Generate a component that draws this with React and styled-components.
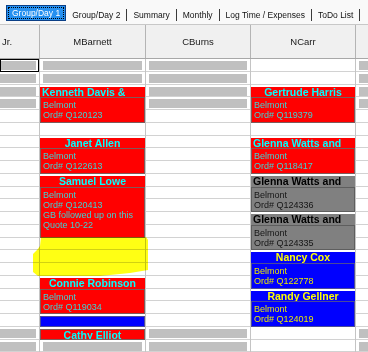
import React from 'react';
import styled, { createGlobalStyle, css } from 'styled-components';

const RH = 12.75;
const COLS = '40px 106px 105px 105px 106px';

const GlobalStyle = createGlobalStyle`
  html, body { margin: 0; padding: 0; background: #fff; }
  body {
    font-family: "Liberation Sans", Arial, sans-serif;
    width: 368px; height: 352px; overflow: hidden;
  }
  * { box-sizing: border-box; }
`;

const Screen = styled.div`
  width: 368px;
  height: 352px;
  overflow: hidden;
  display: flex;
  flex-direction: column;
  background: #fff;
`;

const TabBar = styled.div`
  flex: none;
  height: 25px;
  display: flex;
  align-items: flex-end;
  padding: 0 0 3px 6px;
  background: #f9f9f9;
  border-bottom: 1px solid #c8c8c8;
`;

const Tab = styled.div`
  height: 12px;
  line-height: 12px;
  padding: 0 6px;
  font-size: 8.5px;
  color: #111;
  white-space: nowrap;
  border-right: 1px solid #3a3a3a;
  ${p => p.$active && css`
    height: 16px;
    line-height: 14px;
    padding: 0 5px;
    background: #2590f0;
    color: #fff;
    border: 1px solid #0b3f86;
    outline: 1px dotted #000;
    outline-offset: -3px;
  `}
`;

const HeaderRow = styled.div`
  flex: none;
  height: 34px;
  display: grid;
  grid-template-columns: ${COLS};
  background: #f0f0f0;
  border-bottom: 1px solid #a8a8a8;
  overflow: hidden;
`;

const HeaderCell = styled.div`
  display: flex;
  align-items: center;
  justify-content: ${p => (p.$left ? 'flex-start' : 'center')};
  padding-left: ${p => (p.$left ? '2px' : '0')};
  border-right: 1px solid #b4b4b4;
  font-size: 9.5px;
  color: #1a1a1a;
  white-space: nowrap;
  overflow: hidden;
`;

const Body = styled.div`
  position: relative;
  flex: 1;
  display: grid;
  grid-template-columns: ${COLS};
  overflow: hidden;
`;

const Column = styled.div`
  display: flex;
  flex-direction: column;
  border-right: 1px solid #c4c4c4;
  overflow: hidden;
`;

const Cell = styled.div`
  flex: none;
  height: ${RH}px;
  padding: 2px 3px 0 ${p => (p.$flush ? 0 : 3)}px;
  border-bottom: 1px solid #d2d2d2;
  ${p => p.$focus && css`
    outline: 1px solid #000;
    outline-offset: -1px;
  `}
`;

const Bar = styled.div`
  height: 9px;
  background: #c0c0c0;
`;

const PALETTE = {
  red: { bg: '#ff0000', head: '#00ffff', text: '#3fd2d2', edge: '#7e5a5a' },
  gray: { bg: '#808080', head: '#000000', text: '#151515', edge: '#5e5e5e' },
  blue: { bg: '#0000ff', head: '#ffff00', text: '#e6e600', edge: '#4a4a9a' },
};

const Card = styled.div`
  flex: none;
  height: ${p => p.$span * RH}px;
  padding-top: 2px;
  display: flex;
  flex-direction: column;
  background: #fff;
`;

const CardHeader = styled.div`
  flex: ${p => (p.$alone ? '1 1 auto' : 'none')};
  height: ${p => (p.$alone ? 'auto' : `${RH - 2}px`)};
  display: flex;
  align-items: safe center;
  justify-content: center;
  overflow: hidden;
  padding: 0 2px;
  background: ${p => PALETTE[p.$tone].bg};
  color: ${p => PALETTE[p.$tone].head};
  font-size: 10.5px;
  font-weight: bold;
  line-height: 10.5px;
  ${p => p.$alone && css`border: 1px solid ${PALETTE[p.$tone].edge};`}
`;

const Name = styled.span`
  text-align: left;
`;

const CardBody = styled.div`
  flex: 1;
  padding: 2px 0 0 2px;
  background: ${p => PALETTE[p.$tone].bg};
  border: 1px solid ${p => PALETTE[p.$tone].edge};
  color: ${p => PALETTE[p.$tone].text};
  font-size: 9px;
  line-height: 10px;
  overflow: hidden;
`;

const Line = styled.div`
  white-space: nowrap;
  overflow: hidden;
`;

const Highlight = styled.svg`
  position: absolute;
  left: 0;
  top: 0;
  width: 368px;
  height: 293px;
  pointer-events: none;
  mix-blend-mode: multiply;
`;

const bar = (focus) => ({ type: 'bar', focus });
const empty = () => ({ type: 'empty' });
const rep = (n, f) => Array.from({ length: n }, () => f());
const card = (name, tone, span, lines = []) => ({ type: 'card', name, tone, span, lines });
const ord = (n) => ['Belmont', `Ord# ${n}`];

const columns = [
  {
    header: 'Jr.', left: true, flush: true,
    items: [bar(true), bar(), bar(), bar(), ...rep(17, empty), bar(), bar()],
  },
  {
    header: 'MBarnett',
    items: [
      bar(), bar(),
      card('Kenneth Davis & Associates', 'red', 3, ord('Q120123')),
      empty(),
      card('Janet Allen', 'red', 3, ord('Q122613')),
      card('Samuel Lowe', 'red', 5, [...ord('Q120413'), 'GB followed up on this', 'Quote 10-22']),
      empty(), empty(), empty(),
      card('Connie Robinson', 'red', 3, ord('Q119034')),
      card('', 'blue', 1),
      card('Cathy Elliot', 'red', 1),
      bar(),
    ],
  },
  {
    header: 'CBurns',
    items: [bar(), bar(), bar(), bar(), ...rep(17, empty), bar(), bar()],
  },
  {
    header: 'NCarr',
    items: [
      empty(), empty(),
      card('Gertrude Harris', 'red', 3, ord('Q119379')),
      empty(),
      card('Glenna Watts and Family', 'red', 3, ord('Q118417')),
      card('Glenna Watts and Family', 'gray', 3, ord('Q124336')),
      card('Glenna Watts and Family', 'gray', 3, ord('Q124335')),
      card('Nancy Cox', 'blue', 3, ord('Q122778')),
      card('Randy Gellner', 'blue', 3, ord('Q124019')),
      empty(), empty(),
    ],
  },
  {
    header: '',
    items: [bar(), bar(), bar(), bar(), ...rep(17, empty), bar(), bar()],
  },
];

const tabs = ['Group/Day 1', 'Group/Day 2', 'Summary', 'Monthly', 'Log Time / Expenses', 'ToDo List'];

function Item({ item, flush }) {
  if (item.type === 'bar') {
    return (
      <Cell $flush={flush} $focus={item.focus}>
        <Bar />
      </Cell>
    );
  }
  if (item.type === 'empty') return <Cell $flush={flush} />;
  const alone = item.span === 1;
  return (
    <Card $span={item.span}>
      <CardHeader $tone={item.tone} $alone={alone}>
        <Name>{item.name}</Name>
      </CardHeader>
      {!alone && (
        <CardBody $tone={item.tone}>
          {item.lines.map((l, i) => (
            <Line key={i}>{l}</Line>
          ))}
        </CardBody>
      )}
    </Card>
  );
}

export default function App() {
  return (
    <>
      <GlobalStyle />
      <Screen>
        <TabBar>
          {tabs.map((t, i) => (
            <Tab key={t} $active={i === 0}>{t}</Tab>
          ))}
        </TabBar>
        <HeaderRow>
          {columns.map((c, i) => (
            <HeaderCell key={i} $left={c.left}>{c.header}</HeaderCell>
          ))}
        </HeaderRow>
        <Body>
          {columns.map((c, i) => (
            <Column key={i}>
              {c.items.map((it, j) => (
                <Item key={j} item={it} flush={c.flush} />
              ))}
            </Column>
          ))}
          <Highlight viewBox="0 0 368 293">
            <path
              d="M41 178 L146 178 L148 181 L148 211 L130 214 L100 217 L38 217 L33 213 L33 195 L37 191 L40 187 Z"
              fill="#ffff00"
              opacity="0.92"
            />
          </Highlight>
        </Body>
      </Screen>
    </>
  );
}
